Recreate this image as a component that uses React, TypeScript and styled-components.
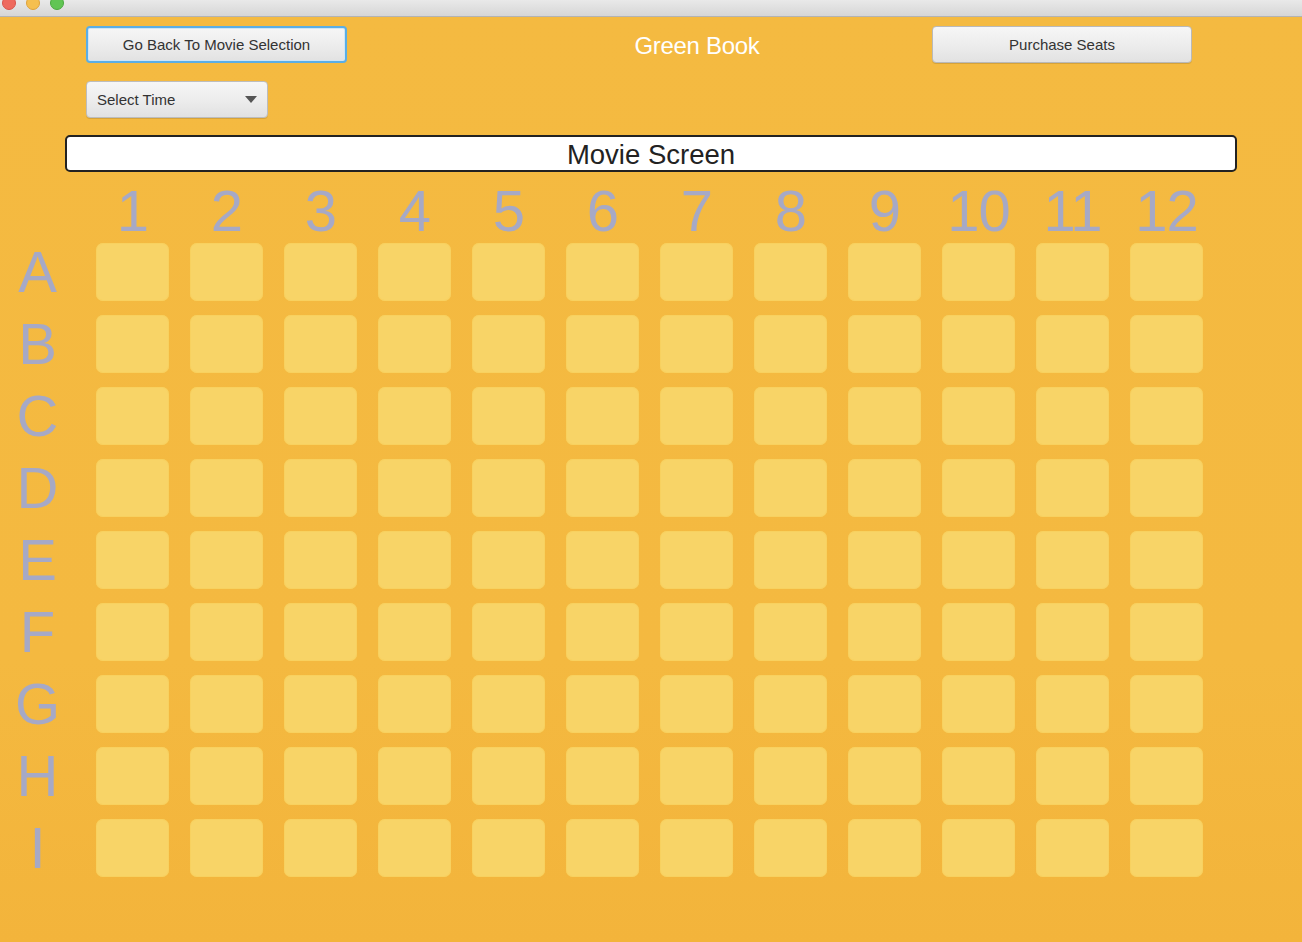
import React from "react";
import styled, { createGlobalStyle } from "styled-components";

const GlobalStyle = createGlobalStyle`
  html, body { margin: 0; padding: 0; height: 100%; }
  body { font-family: "Liberation Sans", Arial, sans-serif; }
  #root { min-height: 100vh; }
`;

const Window = styled.div`
  display: flex;
  flex-direction: column;
  min-height: 100vh;
  background: linear-gradient(180deg, #f4ba41 0%, #f4b940 70%, #f3b43b 100%);
`;

const TitleBar = styled.div`
  height: 16px;
  flex: 0 0 auto;
  border-bottom: 1px solid #b3b3b3;
  background: linear-gradient(180deg, #e9e9e9, #d6d6d6);
  display: flex;
  align-items: flex-start;
  gap: 10px;
  padding-left: 2px;
  overflow: hidden;
`;

const Light = styled.span<{ $c: string; $b: string }>`
  width: 14px;
  height: 14px;
  border-radius: 50%;
  margin-top: -4px;
  background: ${(p) => p.$c};
  border: 0.5px solid ${(p) => p.$b};
  box-sizing: border-box;
`;

const Content = styled.div`
  display: flex;
  flex-direction: column;
  padding-top: 9px;
`;

const TopRow = styled.div`
  display: grid;
  grid-template-columns: 261px 585px 260px;
  margin-left: 86px;
  height: 37px;
  align-items: center;
`;

const Button = styled.button<{ $focused?: boolean }>`
  height: 37px;
  box-sizing: border-box;
  border-radius: 4px;
  border: ${(p) => (p.$focused ? "2px solid #5aaee6" : "1px solid #b9b9b9")};
  background: linear-gradient(180deg, #f6f6f6 0%, #ececec 55%, #e2e2e2 100%);
  box-shadow: ${(p) => (p.$focused ? "inset 0 0 0 1px #cfe6f7" : "0 1px 0 rgba(0,0,0,0.12)")};
  font-family: "Liberation Sans", Arial, sans-serif;
  font-size: 15px;
  letter-spacing: 0;
  color: #333;
  padding: 0;
  cursor: default;
`;

const Title = styled.div`
  color: #ffffff;
  font-family: "Liberation Sans", Arial, sans-serif;
  font-size: 24px;
  letter-spacing: -0.3px;
  text-align: center;
  padding-left: 115px;
  padding-top: 3px;
`;

const SelectRow = styled.div`
  margin-top: 18px;
  margin-left: 86px;
  display: flex;
`;

const Select = styled.div`
  width: 182px;
  height: 37px;
  box-sizing: border-box;
  border: 1px solid #bdbdbd;
  border-radius: 4px;
  background: linear-gradient(180deg, #f6f6f6 0%, #ececec 55%, #e1e1e1 100%);
  box-shadow: 0 1px 0 rgba(0,0,0,0.12);
  display: flex;
  align-items: center;
  justify-content: space-between;
  padding: 0 10px 0 10px;
  font-size: 15px;
  color: #333;
`;

const Arrow = styled.span`
  width: 0;
  height: 0;
  border-left: 6px solid transparent;
  border-right: 6px solid transparent;
  border-top: 7px solid #555;
`;

const Screen = styled.div`
  margin: 17px 0 0 65px;
  width: 1172px;
  height: 37px;
  box-sizing: border-box;
  background: #ffffff;
  border: 2px solid #222;
  border-radius: 5px;
  display: flex;
  align-items: center;
  justify-content: center;
  font-size: 27.5px;
  color: #222;
  padding-top: 2px;
`;

const SeatGrid = styled.div`
  margin-top: 21px;
  display: grid;
  grid-template-columns: 75px repeat(12, 73px);
  grid-template-rows: 36px repeat(9, 58px);
  column-gap: 21px;
  row-gap: 14px;
`;

const Label = styled.div<{ $line: number; $tight?: boolean }>`
  color: #a6a9c6;
  font-family: "Liberation Sans", Arial, sans-serif;
  font-size: 58px;
  line-height: ${(p) => p.$line}px;
  text-align: center;
  letter-spacing: ${(p) => (p.$tight ? "-1px" : "0")};
  white-space: nowrap;
  display: flex;
  justify-content: center;
`;

const Seat = styled.div`
  background: #f8d467;
  border-radius: 7px;
  box-shadow: inset 0 0 0 1px rgba(248, 206, 90, 0.6);
`;

const rows = ["A", "B", "C", "D", "E", "F", "G", "H", "I"];
const cols = Array.from({ length: 12 }, (_, i) => i + 1);

export default function App() {
  return (
    <>
      <GlobalStyle />
      <Window>
        <TitleBar>
          <Light $c="#ee6a5f" $b="#d9534a" />
          <Light $c="#f5bf4f" $b="#dea23a" />
          <Light $c="#61c554" $b="#4aa83e" />
        </TitleBar>
        <Content>
          <TopRow>
            <Button $focused>Go Back To Movie Selection</Button>
            <Title>Green Book</Title>
            <Button>Purchase Seats</Button>
          </TopRow>
          <SelectRow>
            <Select>
              <span>Select Time</span>
              <Arrow />
            </Select>
          </SelectRow>
          <Screen>Movie Screen</Screen>
          <SeatGrid>
            <div />
            {cols.map((c) => (
              <Label key={`c${c}`} $line={36} $tight>
                {c}
              </Label>
            ))}
            {rows.map((r) => (
              <React.Fragment key={r}>
                <Label $line={58}>{r}</Label>
                {cols.map((c) => (
                  <Seat key={`${r}${c}`} />
                ))}
              </React.Fragment>
            ))}
          </SeatGrid>
        </Content>
      </Window>
    </>
  );
}
